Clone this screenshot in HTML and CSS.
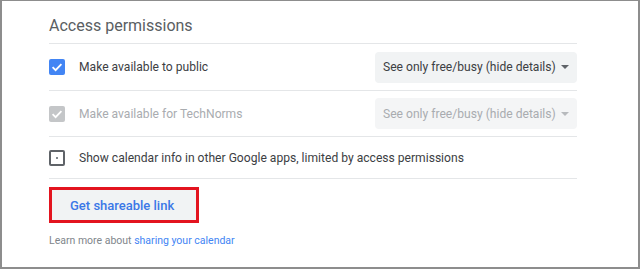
FILE: index.html
```html
<!DOCTYPE html>
<html lang="en">
<head>
<meta charset="UTF-8">
<meta name="viewport" content="width=device-width, initial-scale=1.0">
<title>Access permissions</title>
<link rel="stylesheet" href="styles.css">
</head>
<body>

<div class="frame">
  <div class="panel">
    <h2 class="title">Access permissions</h2>

    <div class="row row-public">
      <span class="box checked">
        <svg width="16" height="16" viewBox="0 0 16 16"><path d="M3.6 8.2l3 3 5.8-6" fill="none" stroke="#fff" stroke-width="1.8"/></svg>
      </span>
      <span class="label">Make available to public</span>
      <div class="select">
        <span>See only free/busy (hide details)</span>
        <span class="arrow"></span>
      </div>
    </div>

    <div class="row row-org disabled">
      <span class="box checked">
        <svg width="16" height="16" viewBox="0 0 16 16"><path d="M3.6 8.2l3 3 5.8-6" fill="none" stroke="#fff" stroke-width="1.8"/></svg>
      </span>
      <span class="label">Make available for TechNorms</span>
      <div class="select">
        <span>See only free/busy (hide details)</span>
        <span class="arrow"></span>
      </div>
    </div>

    <div class="row row-apps">
      <span class="box empty"><i></i></span>
      <span class="label">Show calendar info in other Google apps, limited by access permissions</span>
    </div>

    <button class="share-btn" type="button">Get shareable link</button>

    <p class="learn">Learn more about <a href="#">sharing your calendar</a></p>
  </div>
</div>

</body>
</html>
```

FILE: styles.css
```css
body {
  margin: 0;
  padding: 0;
  background-color: #fff;
  font-family: Roboto, "Liberation Sans", Arial, sans-serif;
}
.frame {
  width: 640px;
  height: 269px;
  box-sizing: border-box;
  border: 2px solid #8d8d8d;
  border-top-width: 1px;
  overflow: hidden;
}
.panel {
  width: 528px;
  margin-left: 47px;
}
.title {
  margin: 0;
  height: 43px;
  box-sizing: border-box;
  padding-top: 15px;
  font-size: 16px;
  line-height: 20px;
  font-weight: 400;
  color: #5a5e62;
  border-bottom: 1px solid #e4e6e8;
}
.row {
  display: flex;
  align-items: center;
  border-bottom: 1px solid #e4e6e8;
  font-size: 12.1px;
  color: #3c4043;
}
.row-public {
  height: 46px;
}
.row-org {
  height: 45px;
}
.row-apps {
  height: 41px;
}
.box {
  width: 16px;
  height: 16px;
  border-radius: 2px;
  box-sizing: border-box;
  flex-shrink: 0;
}
.box svg {
  display: block;
}
.box.checked {
  background-color: #4285f4;
}
.disabled .box.checked {
  background-color: #c4c6c8;
}
.box.empty {
  border: 2px solid #5f6368;
  display: flex;
  align-items: center;
  justify-content: center;
}
.box.empty i {
  width: 2px;
  height: 2px;
  background-color: #80868b;
}
.label {
  flex: 1;
  margin-left: 14px;
}
.disabled .label {
  color: #a9acb0;
}
.select {
  display: flex;
  align-items: center;
  width: 202px;
  height: 31px;
  box-sizing: border-box;
  padding: 0 8px;
  border-radius: 4px;
  background-color: #f1f3f4;
  color: #3c4043;
  white-space: nowrap;
}
.disabled .select {
  background-color: #f4f5f6;
  color: #a9acb0;
}
.arrow {
  margin-left: auto;
  width: 0;
  height: 0;
  border-left: 4px solid transparent;
  border-right: 4px solid transparent;
  border-top: 4px solid #5f6368;
}
.disabled .arrow {
  border-top-color: #b7babd;
}
.share-btn {
  display: block;
  margin: 8px 0 0 0;
  width: 150px;
  height: 36px;
  padding: 0 0 0 18px;
  text-align: left;
  border: 3px solid #e3141f;
  background-color: #f1f3f4;
  font-family: Roboto, "Liberation Sans", Arial, sans-serif;
  font-size: 13px;
  font-weight: 500;
  color: #3b78e7;
  cursor: pointer;
}
.learn {
  margin: 11px 0 0 0;
  font-size: 10.5px;
  line-height: 14px;
  color: #80868b;
}
.learn a {
  color: #4285f4;
  text-decoration: none;
}
```
